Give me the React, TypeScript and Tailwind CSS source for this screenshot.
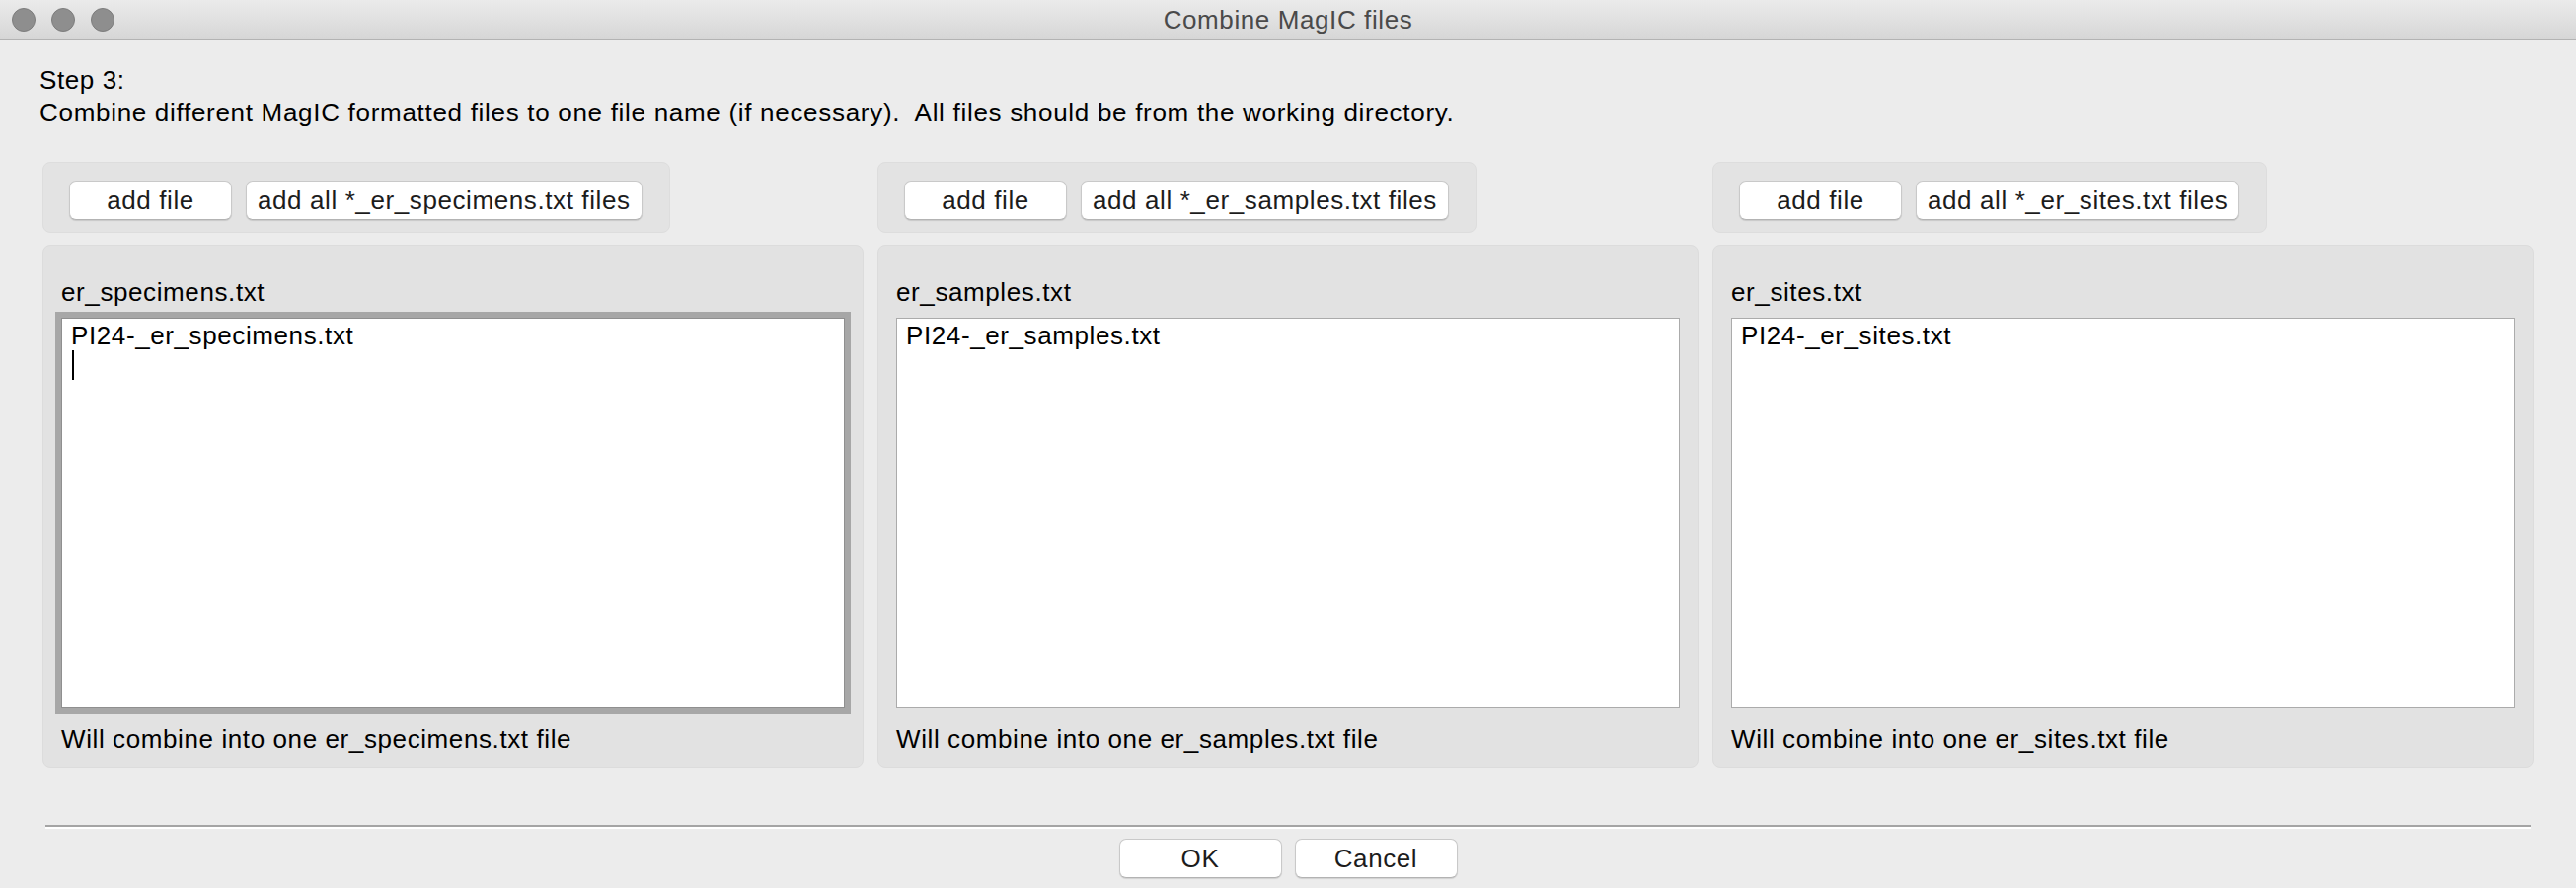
import React from 'react';

const columns = [
  { name: 'er_specimens.txt', file: 'PI24-_er_specimens.txt', focused: true },
  { name: 'er_samples.txt', file: 'PI24-_er_samples.txt', focused: false },
  { name: 'er_sites.txt', file: 'PI24-_er_sites.txt', focused: false },
];

function MacButton({ children, className = '' }: { children: React.ReactNode; className?: string }) {
  return (
    <button
      className={`h-[40px] px-[11px] bg-white rounded-[7px] border border-[#c9c9c9] border-b-[#b3b3b3] shadow-[0_1px_1px_rgba(0,0,0,0.12)] text-[#1c1c1c] leading-none ${className}`}
    >
      {children}
    </button>
  );
}

function TitleBar() {
  return (
    <div className="relative h-[41px] shrink-0 flex items-center justify-center bg-gradient-to-b from-[#ebebeb] to-[#d6d6d6] border-b border-[#b3b3b3]">
      <div className="absolute left-[12px] top-[8px] flex gap-[16px]">
        <span className="w-[24px] h-[24px] rounded-full bg-[#8e8e8e] border border-[#7d7d7d]" />
        <span className="w-[24px] h-[24px] rounded-full bg-[#8e8e8e] border border-[#7d7d7d]" />
        <span className="w-[24px] h-[24px] rounded-full bg-[#8e8e8e] border border-[#7d7d7d]" />
      </div>
      <span className="text-[#4a4a4a]">Combine MagIC files</span>
    </div>
  );
}

function FileColumn({ name, file, focused }: { name: string; file: string; focused: boolean }) {
  return (
    <div className="flex flex-col">
      <div className="self-start flex gap-[14px] pl-[26px] pr-[27px] pt-[18px] pb-[12px] bg-[#e3e3e3] border border-[#dddddd] rounded-[8px]">
        <MacButton className="w-[165px]">add file</MacButton>
        <MacButton>{`add all *_${name} files`}</MacButton>
      </div>

      <div className="mt-[12px] flex flex-col px-[18px] pt-[32px] pb-[13px] bg-[#e2e2e2] border border-[#dcdcdc] rounded-[8px]">
        <div className="leading-[30px]">{name}</div>
        <div
          className={`mt-[11px] h-[396px] bg-white border pl-[9px] pt-[2px] leading-[30px] ${
            focused ? 'border-[#8f8f8f] shadow-[0_0_0_6px_#a7a7a7]' : 'border-[#ababab]'
          }`}
        >
          <div>{file}</div>
          {focused && <div className="ml-[1px] w-[2px] h-[30px] bg-black" />}
        </div>
        <div className="mt-[16px] leading-[30px]">{`Will combine into one ${name} file`}</div>
      </div>
    </div>
  );
}

export default function App() {
  return (
    <div className="w-[2610px] h-[900px] overflow-hidden flex flex-col bg-[#ececec] text-[26px] tracking-[0.6px] text-black font-['Liberation_Sans',Arial,sans-serif]">
      <TitleBar />

      <div className="pt-[24px] pl-[40px] leading-[33px]">
        <div>Step 3:</div>
        <div className="tracking-[0.7px]">
          Combine different MagIC formatted files to one file name (if necessary).&nbsp; All files should be from the working
          directory.
        </div>
      </div>

      <div className="mt-[33px] px-[43px] grid grid-cols-3 gap-[14px]">
        {columns.map((c) => (
          <FileColumn key={c.name} {...c} />
        ))}
      </div>

      <div className="mt-[58px] mx-[46px]">
        <div className="h-[2px] bg-[#a4a4a4]" />
        <div className="h-[2px] bg-white" />
      </div>

      <div className="mt-[10px] flex justify-center gap-[13px]">
        <MacButton className="w-[165px] h-[39px]">OK</MacButton>
        <MacButton className="w-[165px] h-[39px]">Cancel</MacButton>
      </div>
    </div>
  );
}
